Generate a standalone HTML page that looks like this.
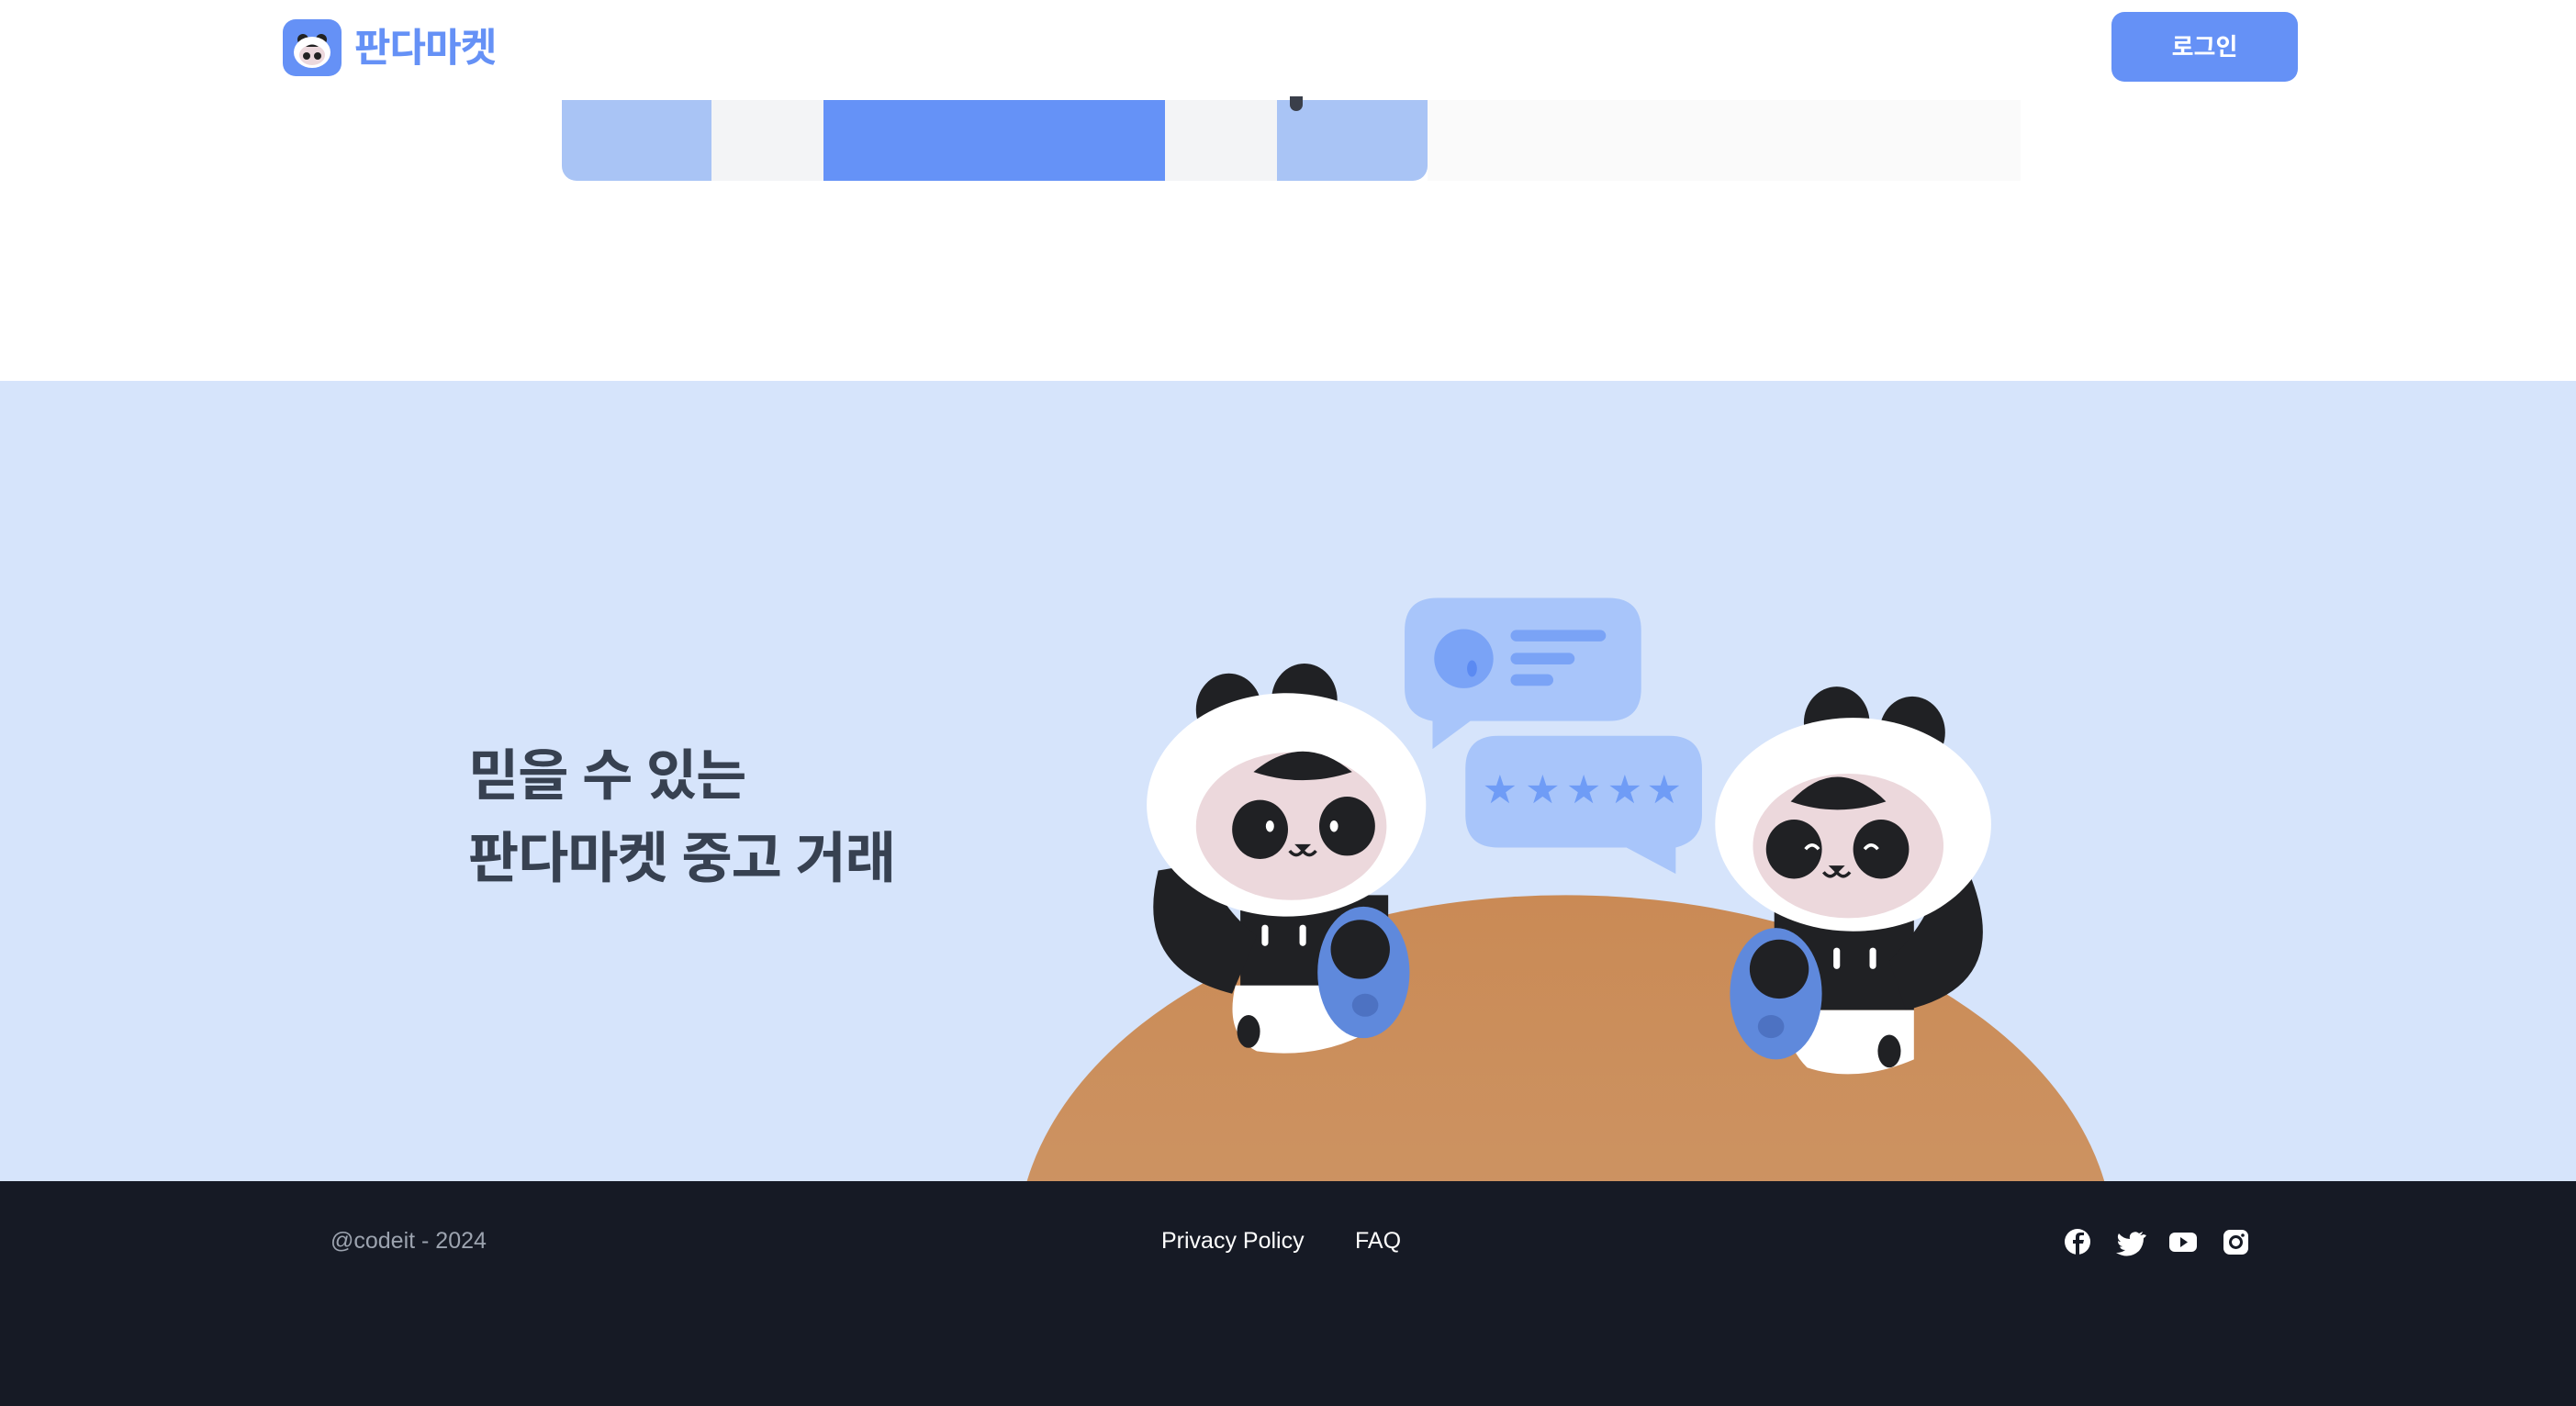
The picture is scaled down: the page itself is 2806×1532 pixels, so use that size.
<!DOCTYPE html>
<html><head><meta charset="utf-8"><style>
*{margin:0;padding:0;box-sizing:border-box}
html,body{width:2806px;height:1532px;overflow:hidden}
body{background:#fff;font-family:"Liberation Sans","Noto Sans CJK KR",sans-serif;position:relative}
.abs{position:absolute}
</style></head><body>
<!-- header -->
<div class="abs" style="left:308px;top:21px;width:64px;height:62px;background:#6591f6;border-radius:14px;overflow:hidden">
<svg width="64" height="62" viewBox="0 0 64 62"><ellipse cx="22" cy="22" rx="6" ry="6" fill="#222"/><ellipse cx="42" cy="22" rx="6" ry="6" fill="#222"/><ellipse cx="32" cy="36" rx="20" ry="17" fill="#fff"/><ellipse cx="32" cy="39" rx="14" ry="11" fill="#ecd8dc"/><ellipse cx="26" cy="40" rx="4" ry="4" fill="#222"/><ellipse cx="38" cy="40" rx="4" ry="4" fill="#222"/><path d="M25 30 Q32 25 39 30 Z" fill="#222"/></svg>
</div>
<div class="abs" style="left:386px;top:18px;font-size:43px;font-weight:bold;color:#6591f6;letter-spacing:-1px">판다마켓</div>
<div class="abs" style="left:2300px;top:13px;width:203px;height:76px;background:#6591f6;border-radius:14px;color:#fff;font-size:26px;font-weight:bold;text-align:center;line-height:76px">로그인</div>
<!-- strip -->
<div class="abs" style="left:612px;top:109px;width:943px;height:88px;border-radius:0 0 16px 16px;overflow:hidden;display:flex">
<div style="width:163px;background:#a9c4f5"></div><div style="width:122px;background:#f3f4f6"></div><div style="width:372px;background:#6592f7"></div><div style="width:122px;background:#f3f4f6"></div><div style="flex:1;background:#a9c4f5"></div>
</div>
<div class="abs" style="left:1555px;top:109px;width:646px;height:88px;background:#fafafa"></div>
<div class="abs" style="left:1405px;top:105px;width:14px;height:16px;border-radius:0 0 7px 7px;background:#3a3f4a"></div>
<!-- blue section -->
<div class="abs" style="left:0;top:415px;width:2806px;height:872px;background:#d6e4fb;overflow:hidden">
<svg class="abs" style="left:0;top:0" width="2806" height="872" viewBox="0 232 1568 487">
<defs><linearGradient id="g" x1="0" y1="0" x2="0" y2="1"><stop offset="0" stop-color="#ca8a55"/><stop offset="1" stop-color="#cf9f74"/></linearGradient></defs>
<ellipse cx="953" cy="760" rx="334" ry="215" fill="url(#g)"/>
<path d="M875 364 H979 Q999 364 999 384 V419 Q999 439 979 439 H895 L872 456 V439 Q855 436 855 419 V384 Q855 364 875 364Z" fill="#a8c5fa"/>
<circle cx="891" cy="401" r="18" fill="#7aa3f6"/><ellipse cx="896" cy="407" rx="3" ry="5" fill="#5b8af2"/>
<g stroke="#7aa3f6" stroke-width="7" stroke-linecap="round"><line x1="923" y1="387" x2="974" y2="387"/><line x1="923" y1="401" x2="955" y2="401"/><line x1="923" y1="414" x2="942" y2="414"/></g>
<path d="M912 448 H1016 Q1036 448 1036 468 V496 Q1036 512 1020 516 V532 L990 516 H912 Q892 516 892 496 V468 Q892 448 912 448Z" fill="#a8c5fa"/>
<g fill="#6f9cf6" font-size="24" text-anchor="middle" font-family="DejaVu Sans"><text x="913" y="489">★</text><text x="939" y="489">★</text><text x="964" y="489">★</text><text x="989" y="489">★</text><text x="1013" y="489">★</text></g>
<!-- left panda -->
<g>
<ellipse cx="748" cy="432" rx="20" ry="22" fill="#202124"/><ellipse cx="794" cy="426" rx="20" ry="22" fill="#202124"/>
<path d="M755 545 H845 V605 H755Z" fill="#202124"/>
<path d="M705 530 Q690 590 750 605 L765 570 Q740 550 735 525Z" fill="#202124"/>
<path d="M752 600 H830 V630 Q800 645 765 640 Q745 630 752 600Z" fill="#fff"/>
<ellipse cx="760" cy="628" rx="7" ry="10" fill="#202124"/>
<ellipse cx="783" cy="490" rx="85" ry="68" fill="#fff"/>
<ellipse cx="786" cy="503" rx="58" ry="45" fill="#ecd8dc"/>
<path d="M763 470 Q793 445 823 470 Q793 480 763 470Z" fill="#202124"/>
<ellipse cx="767" cy="505" rx="17" ry="18" fill="#202124"/><ellipse cx="820" cy="503" rx="17" ry="18" fill="#202124"/>
<ellipse cx="773" cy="503" rx="2.5" ry="3.5" fill="#fff"/><ellipse cx="812" cy="503" rx="2.5" ry="3.5" fill="#fff"/>
<path d="M788 514 h10 l-5 5z" fill="#202124"/><path d="M785 518 q4 5 8 0 q4 5 8 0" stroke="#202124" stroke-width="2" fill="none"/>
<rect x="768" y="563" width="4" height="13" rx="2" fill="#fff"/><rect x="791" y="563" width="4" height="13" rx="2" fill="#fff"/>
<ellipse cx="830" cy="592" rx="28" ry="40" fill="#5f89dc"/><circle cx="828" cy="578" r="18" fill="#202124"/><ellipse cx="831" cy="612" rx="8" ry="7" fill="#4d72c2"/>
</g>
<!-- right panda -->
<g>
<ellipse cx="1118" cy="440" rx="20" ry="22" fill="#202124"/><ellipse cx="1164" cy="446" rx="20" ry="22" fill="#202124"/>
<path d="M1080 555 H1165 V615 H1080Z" fill="#202124"/>
<path d="M1200 535 Q1225 600 1160 615 L1150 585 Q1175 560 1180 535Z" fill="#202124"/>
<path d="M1090 615 H1165 V645 Q1130 660 1100 650 Q1085 635 1090 615Z" fill="#fff"/>
<ellipse cx="1150" cy="640" rx="7" ry="10" fill="#202124"/>
<ellipse cx="1128" cy="502" rx="84" ry="65" fill="#fff"/>
<ellipse cx="1125" cy="515" rx="58" ry="44" fill="#ecd8dc"/>
<path d="M1090 488 Q1118 458 1148 488 Q1118 498 1090 488Z" fill="#202124"/>
<ellipse cx="1092" cy="517" rx="17" ry="18" fill="#202124"/><ellipse cx="1145" cy="517" rx="17" ry="18" fill="#202124"/>
<path d="M1099 517 q4 -5 8 0 M1135 517 q4 -5 8 0" stroke="#fff" stroke-width="2" fill="none"/>
<path d="M1113 527 h10 l-5 5z" fill="#202124"/><path d="M1110 531 q4 5 8 0 q4 5 8 0" stroke="#202124" stroke-width="2" fill="none"/>
<rect x="1116" y="577" width="4" height="13" rx="2" fill="#fff"/><rect x="1138" y="577" width="4" height="13" rx="2" fill="#fff"/>
<ellipse cx="1081" cy="605" rx="28" ry="40" fill="#5f89dc"/><circle cx="1083" cy="590" r="18" fill="#202124"/><ellipse cx="1078" cy="625" rx="8" ry="7" fill="#4d72c2"/>
</g>
</svg>
<div class="abs" style="left:510px;top:386px;font-size:60px;font-weight:bold;color:#374151;line-height:90px;letter-spacing:-1px">믿을 수 있는<br>판다마켓 중고 거래</div>
</div>
<!-- footer -->
<div class="abs" style="left:0;top:1287px;width:2806px;height:245px;background:#161a25"></div>
<div class="abs" style="left:360px;top:1338px;font-size:25px;color:#9ca3af">@codeit - 2024</div>
<div class="abs" style="left:1265px;top:1338px;font-size:25px;color:#fff">Privacy Policy</div>
<div class="abs" style="left:1476px;top:1338px;font-size:25px;color:#fff">FAQ</div>
<svg class="abs" style="left:2248px;top:1337px" width="210" height="32" viewBox="0 0 210 32">
<circle cx="15" cy="16" r="14" fill="#fff"/><path d="M17 30 V18 h4 l1-4 h-5 v-3 q0-2 2-2 h3 V6 h-4 q-5 0-5 5 v3 h-3 v4 h3 v12z" fill="#161a25"/>
<path d="M87 8 q-2 1 -4 1 q2 -1 3 -4 q-2 1 -4 2 q-3 -3 -7 -1 q-4 2 -3 7 q-7 0 -12 -6 q-3 5 2 9 q-2 0 -3 -1 q0 5 5 6 q-2 1 -3 0 q1 4 6 4 q-4 3 -10 3 q14 8 25 -2 q5 -6 5 -14 q2 -1 3 -3z" fill="#fff"/>
<rect x="115" y="6" width="30" height="21" rx="6" fill="#fff"/><path d="M127 11 v11 l8 -5.5z" fill="#161a25"/>
<rect x="174" y="3" width="27" height="27" rx="7" fill="#fff"/><circle cx="187.5" cy="16.5" r="6" fill="none" stroke="#161a25" stroke-width="3"/><circle cx="195" cy="9" r="1.8" fill="#161a25"/>
</svg>
</body></html>
